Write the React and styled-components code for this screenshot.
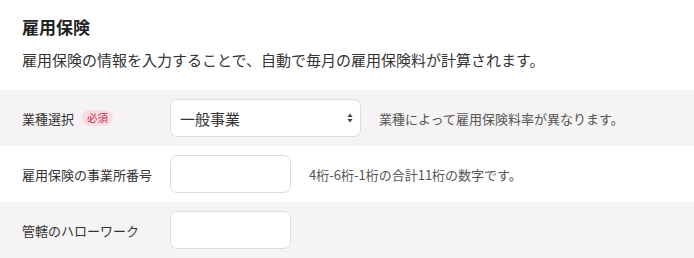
import styled, { createGlobalStyle } from "styled-components";

const GlobalStyle = createGlobalStyle`
  body {
    margin: 0;
    background: #fff;
    font-family: "Noto Sans CJK JP", "Noto Sans", sans-serif;
    color: #333;
  }
`;

const Section = styled.section`
  padding-top: 15px;
`;

const Heading = styled.h2`
  margin: 0 22px;
  font-size: 17px;
  line-height: 24px;
  font-weight: 700;
  color: #222;
`;

const Lead = styled.p`
  margin: 9px 22px 18px;
  font-size: 15px;
  line-height: 24px;
  color: #333;
`;

const Row = styled.div`
  display: grid;
  grid-template-columns: 148px auto 1fr;
  align-items: center;
  padding: 9px 22px;
  background: ${(p) => (p.$shaded ? "#f5f3f3" : "#fff")};
`;

const Label = styled.div`
  display: flex;
  align-items: center;
  gap: 8px;
  font-size: 13px;
  color: #333;
  white-space: nowrap;
`;

const Required = styled.span`
  display: inline-flex;
  align-items: center;
  justify-content: center;
  height: 16px;
  padding: 0 5px;
  border-radius: 8px;
  background: #fadde3;
  color: #c5304b;
  font-size: 10.5px;
  line-height: 1;
`;

const SelectWrap = styled.div`
  position: relative;
  width: 191px;
`;

const Select = styled.select`
  appearance: none;
  width: 100%;
  height: 38px;
  padding: 0 28px 0 9px;
  border: 1px solid #dcdcdc;
  border-radius: 7px;
  background: #fff;
  font-family: inherit;
  font-size: 15px;
  color: #333;
`;

const Arrows = styled.svg`
  position: absolute;
  right: 8px;
  top: 50%;
  transform: translateY(-50%);
  pointer-events: none;
`;

const Input = styled.input`
  box-sizing: border-box;
  width: 121px;
  height: 38px;
  border: 1px solid #dcdcdc;
  border-radius: 7px;
  background: #fff;
  font-family: inherit;
  font-size: 15px;
`;

const Hint = styled.div`
  margin-left: 18px;
  font-size: 13px;
  color: #555;
`;

export default function App() {
  return (
    <Section>
      <GlobalStyle />
      <Heading>雇用保険</Heading>
      <Lead>雇用保険の情報を入力することで、自動で毎月の雇用保険料が計算されます。</Lead>

      <Row $shaded>
        <Label>
          業種選択<Required>必須</Required>
        </Label>
        <SelectWrap>
          <Select defaultValue="general">
            <option value="general">一般事業</option>
          </Select>
          <Arrows width="6" height="10" viewBox="0 0 6 10">
            <path d="M3 0.5 L5.6 4 H0.4 Z" fill="#444" />
            <path d="M3 9.5 L5.6 6 H0.4 Z" fill="#444" />
          </Arrows>
        </SelectWrap>
        <Hint>業種によって雇用保険料率が異なります。</Hint>
      </Row>

      <Row>
        <Label>雇用保険の事業所番号</Label>
        <Input />
        <Hint>4桁-6桁-1桁の合計11桁の数字です。</Hint>
      </Row>

      <Row $shaded>
        <Label>管轄のハローワーク</Label>
        <Input />
        <Hint />
      </Row>
    </Section>
  );
}
